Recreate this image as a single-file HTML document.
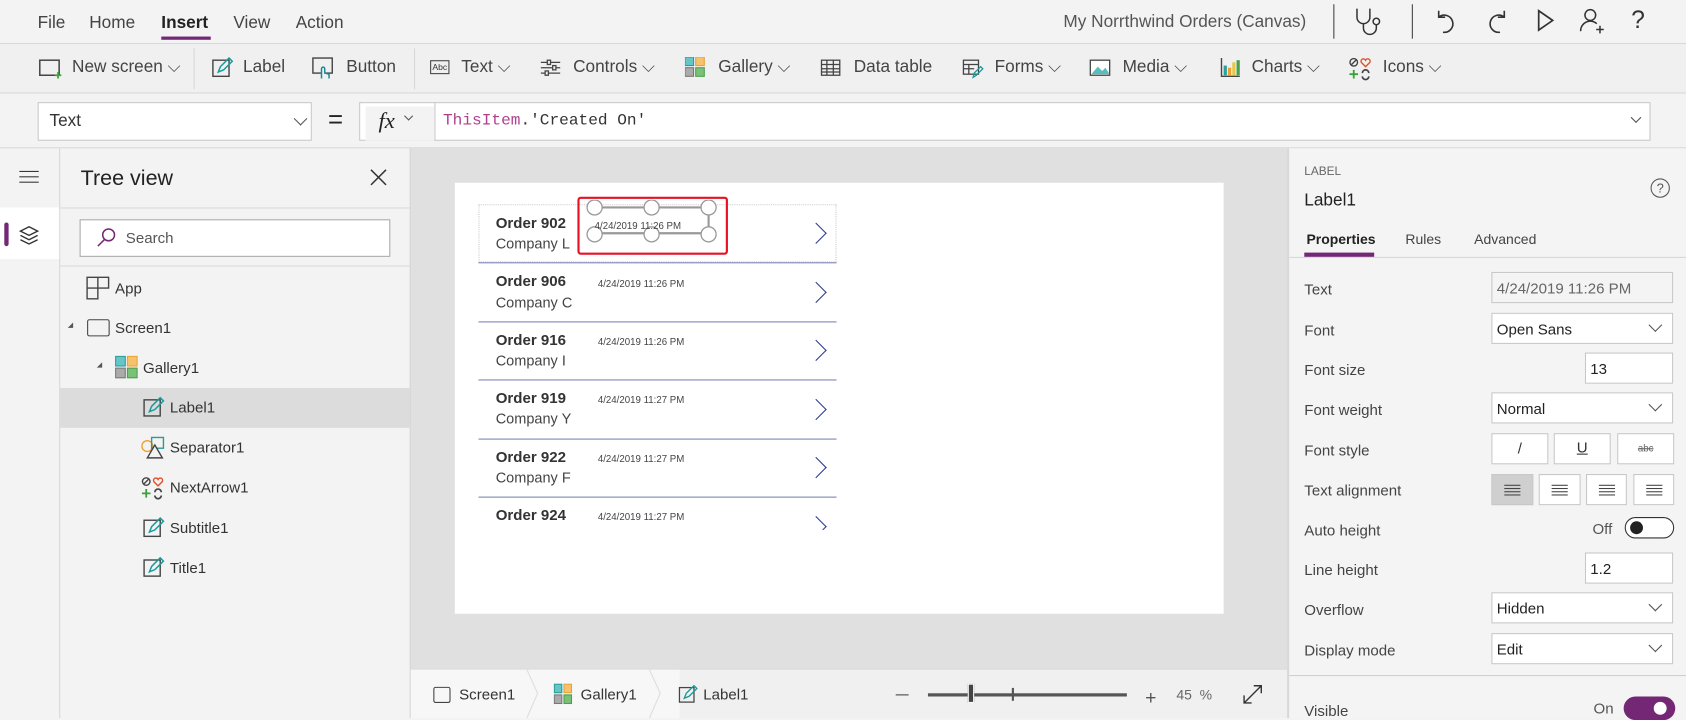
<!DOCTYPE html>
<html><head><meta charset="utf-8"><style>
*{box-sizing:border-box;margin:0;padding:0}
html,body{width:1686px;height:718px;overflow:hidden;background:#f3f3f3}
#r{position:absolute;left:0;top:0;width:1568px;height:668px;transform:scale(1.07526,1.07485);transform-origin:0 0;font-family:"Liberation Sans",sans-serif;color:#333;background:#f3f3f3}
.a{position:absolute;white-space:nowrap}
.t{font-size:16px;color:#444}
.box{position:absolute;background:#fff;border:1px solid #c8c8c8}
.chev{position:absolute;width:9px;height:9px;border-right:1.3px solid #555;border-bottom:1.3px solid #555;transform:rotate(45deg)}
.lbl{position:absolute;left:1213px;font-size:14px;color:#444}
.dd{position:absolute;left:1387px;width:169px;height:29px;background:#fff;border:1px solid #c8c8c8;font-size:14px;padding:6px 0 0 4px;color:#222}
.row{position:absolute;left:445px;width:333px;border-bottom:1px solid #7d83b5}
.ti{font-size:14px;font-weight:bold;color:#333;position:absolute;left:16px}
.su{font-size:13.5px;color:#444;position:absolute;left:16px}
.dt{font-size:9px;color:#444;position:absolute;left:111px}
.arr{position:absolute;left:307px;width:14px;height:14px;border-right:1.6px solid #2f3a8f;border-top:1.6px solid #2f3a8f;transform:rotate(45deg)}
.tv{position:absolute;font-size:14px;color:#333}
.ab{position:absolute;top:441px;width:54px;height:29px;background:#fff;border:1px solid #c8c8c8}
.ab i{position:absolute;height:1px;background:#444}
</style></head><body><div id="r">
<div class="a t" style="left:35px;top:13px">File</div>
<div class="a t" style="left:83px;top:13px">Home</div>
<div class="a t" style="left:150px;top:13px;font-weight:bold;color:#222">Insert</div>
<div class="a" style="left:150px;top:34px;width:46px;height:3px;background:#742774"></div>
<div class="a t" style="left:217px;top:13px">View</div>
<div class="a t" style="left:275px;top:13px">Action</div>
<div class="a t" style="left:989px;top:12px;color:#555">My Norrthwind Orders (Canvas)</div>
<div class="a" style="left:1240px;top:4px;width:1px;height:32px;background:#444"></div>
<div class="a" style="left:1313px;top:4px;width:1px;height:32px;background:#444"></div>
<svg class="a" style="left:1258px;top:6px" width="32" height="28" viewBox="0 0 32 28" fill="none" stroke="#333" stroke-width="1.4"><path d="M4 2v8a6 6 0 0 0 12 0V2M10 16v4a6 6 0 0 0 12 0v-3"/><circle cx="22" cy="14" r="3"/></svg>
<svg class="a" style="left:1333px;top:6px" width="24" height="26" viewBox="0 0 24 26" fill="none" stroke="#333" stroke-width="1.5"><path d="M5 4v6h6M5 10a8 8 0 1 1 4 14"/></svg>
<svg class="a" style="left:1380px;top:6px" width="24" height="26" viewBox="0 0 24 26" fill="none" stroke="#333" stroke-width="1.5"><path d="M19 4v6h-6M19 10a8 8 0 1 0-4 14"/></svg>
<svg class="a" style="left:1428px;top:8px" width="20" height="22" viewBox="0 0 20 22" fill="none" stroke="#333" stroke-width="1.6"><path d="M3 2l13 9-13 9z"/></svg>
<svg class="a" style="left:1468px;top:6px" width="26" height="26" viewBox="0 0 26 26" fill="none" stroke="#333" stroke-width="1.4"><circle cx="11" cy="8" r="5"/><path d="M2 23a9 9 0 0 1 15-7M20 18v7M16.5 21.5h7"/></svg>
<div class="a" style="left:1517px;top:5px;font-size:23px;color:#333">?</div>
<div class="a" style="left:0;top:40px;width:1568px;height:1px;background:#d8d8d8"></div>
<div class="a" style="left:0;top:41px;width:1568px;height:45px;background:#f0f0f0"></div>
<div class="a" style="left:0;top:86px;width:1568px;height:1px;background:#d8d8d8"></div>
<div class="a" style="left:180px;top:45px;width:1px;height:38px;background:#d8d8d8"></div>
<div class="a" style="left:385px;top:45px;width:1px;height:38px;background:#d8d8d8"></div>
<svg class="a" style="left:36px;top:55px" width="22" height="18" viewBox="0 0 22 18" fill="none"><rect x="1" y="1" width="18" height="14" stroke="#444" stroke-width="1.4"/><path d="M18 12v6M15 15h6" stroke="#3aa13a" stroke-width="1.6"/></svg>
<div class="a t" style="left:67px;top:54px">New screen ⌵</div>
<svg class="a" style="left:197px;top:53px" width="20" height="20" viewBox="0 0 20 20" fill="none"><rect x="1" y="3" width="15" height="15" stroke="#444" stroke-width="1.3"/><path d="M6 14l2-5 8-8 3 3-8 8z" stroke="#1a9a9a" stroke-width="1.4"/></svg>
<div class="a t" style="left:226px;top:54px">Label</div>
<svg class="a" style="left:290px;top:53px" width="22" height="22" viewBox="0 0 22 22" fill="none"><rect x="1" y="1" width="18" height="14" stroke="#444" stroke-width="1.3"/><path d="M9 20v-9a1.5 1.5 0 0 1 3 0v4l4 1v4" stroke="#1a8a9a" stroke-width="1.4" fill="#f0f0f0"/></svg>
<div class="a t" style="left:322px;top:54px">Button</div>
<div class="a" style="left:400px;top:56px;width:18px;height:13px;border:1px solid #444;font-size:8px;line-height:11px;text-align:center">Abc</div>
<div class="a t" style="left:429px;top:54px">Text ⌵</div>
<svg class="a" style="left:502px;top:55px" width="20" height="16" viewBox="0 0 20 16" fill="none" stroke="#444" stroke-width="1.2"><path d="M1 3h18M1 8h18M1 13h18"/><rect x="7" y="1" width="3" height="4" fill="#f0f0f0"/><rect x="12" y="6" width="3" height="4" fill="#f0f0f0"/><rect x="5" y="11" width="3" height="4" fill="#f0f0f0"/></svg>
<div class="a t" style="left:533px;top:54px">Controls ⌵</div>
<svg class="a" style="left:637px;top:53px" width="19" height="19"><rect x="0" y="0" width="8" height="8" fill="#66c6c6" stroke="#2a9a9a"/><rect x="10" y="0" width="8" height="8" fill="#f6c26b" stroke="#e8a23a"/><rect x="0" y="10" width="8" height="8" fill="#aaa" stroke="#777"/><rect x="10" y="10" width="8" height="8" fill="#79c179" stroke="#4aa04a"/></svg>
<div class="a t" style="left:668px;top:54px">Gallery ⌵</div>
<svg class="a" style="left:763px;top:55px" width="19" height="16" viewBox="0 0 19 16" fill="none" stroke="#444" stroke-width="1.2"><rect x="1" y="1" width="17" height="14"/><path d="M1 5h17M1 9h17M1 12h17M6 1v14M12 1v14"/></svg>
<div class="a t" style="left:794px;top:54px">Data table</div>
<svg class="a" style="left:895px;top:55px" width="20" height="18" viewBox="0 0 20 18" fill="none" stroke="#444" stroke-width="1.2"><rect x="1" y="1" width="14" height="13"/><path d="M1 5h14M1 9h10M6 5v9"/><path d="M10 17l1-4 6-6 2 2-6 6z" stroke="#1a9a9a"/></svg>
<div class="a t" style="left:925px;top:54px">Forms ⌵</div>
<svg class="a" style="left:1013px;top:55px" width="20" height="16" viewBox="0 0 20 16"><rect x="1" y="1" width="18" height="14" fill="#fff" stroke="#444" stroke-width="1.2"/><path d="M2 14l6-7 4 4 3-3 4 6z" fill="#55bfbf"/></svg>
<div class="a t" style="left:1044px;top:54px">Media ⌵</div>
<svg class="a" style="left:1135px;top:53px" width="19" height="19"><path d="M1 1v17h17" stroke="#444" fill="none" stroke-width="1.3"/><rect x="3" y="8" width="3" height="9" fill="#2aa0a0"/><rect x="7" y="10" width="3" height="7" fill="#f0a030"/><rect x="11" y="5" width="3" height="12" fill="#e8c84a"/><rect x="15" y="3" width="3" height="14" fill="#4aa04a"/></svg>
<div class="a t" style="left:1164px;top:54px">Charts ⌵</div>
<svg class="a" style="left:1254px;top:53px" width="22" height="22" viewBox="0 0 22 22" fill="none" stroke-width="1.3"><circle cx="5" cy="5" r="3.5" stroke="#444"/><path d="M2.5 7.5l5-5" stroke="#444"/><path d="M16 9l-4-4a2 2 0 0 1 4-2 2 2 0 0 1 4 2z" stroke="#e0502a"/><path d="M5 12v8M1 16h8" stroke="#3aa13a" stroke-width="1.7"/><path d="M13 15a3 3 0 0 1 6 0M19 18a3 3 0 0 1-6 0" stroke="#444" stroke-width="1.6"/></svg>
<div class="a t" style="left:1286px;top:54px">Icons ⌵</div>
<div class="box" style="left:35px;top:95px;width:255px;height:36px"></div>
<div class="a" style="left:46px;top:104px;font-size:16px;color:#333">Text</div>
<div class="chev" style="left:275px;top:106px"></div>
<div class="a" style="left:305px;top:98px;font-size:24px;color:#222">=</div>
<div class="box" style="left:334px;top:95px;width:1201px;height:36px"></div>
<div class="a" style="left:404px;top:95px;width:1px;height:36px;background:#c8c8c8"></div>
<div class="a" style="left:340px;top:99px;width:64px;height:32px;background:#f3f3f3"></div>
<div class="a" style="left:352px;top:100px;font-size:21px;font-style:italic;font-family:'Liberation Serif',serif;color:#222">fx</div>
<div class="chev" style="left:377px;top:105px;width:6px;height:6px;border-width:1px"></div>
<div class="a" style="left:412px;top:104px;font-family:'Liberation Mono',monospace;font-size:15px;color:#333"><span style="color:#b0408f">ThisItem</span>.'Created On'</div>
<div class="chev" style="left:1518px;top:106px;width:7px;height:7px;border-width:1px"></div>
<div class="a" style="left:0;top:137px;width:1568px;height:1px;background:#d8d8d8"></div>
<div class="a" style="left:55px;top:138px;width:1px;height:530px;background:#d8d8d8"></div>
<div class="a" style="left:18px;top:159px;width:18px;height:1.3px;background:#333;box-shadow:0 5px 0 #333,0 10px 0 #333"></div>
<div class="a" style="left:0;top:193px;width:55px;height:48px;background:#fff"></div>
<div class="a" style="left:4px;top:207px;width:4px;height:22px;background:#742774;border-radius:2px"></div>
<svg class="a" style="left:17px;top:210px" width="20" height="18" viewBox="0 0 20 18" fill="none" stroke="#333" stroke-width="1.3"><path d="M10 1l8 4-8 4-8-4z"/><path d="M2 9l8 4 8-4M2 13l8 4 8-4"/></svg>
<div class="a" style="left:75px;top:155px;font-size:20px;color:#222">Tree view</div>
<svg class="a" style="left:344px;top:157px" width="16" height="16" stroke="#333" stroke-width="1.4"><path d="M1 1l14 14M15 1L1 15"/></svg>
<div class="a" style="left:56px;top:193px;width:325px;height:1px;background:#dadada"></div>
<div class="box" style="left:74px;top:204px;width:289px;height:35px;border-color:#aaa"></div>
<svg class="a" style="left:89px;top:211px" width="20" height="20" fill="none" stroke="#742774" stroke-width="1.4"><circle cx="12" cy="7.5" r="5.5"/><path d="M8 12l-6 6"/></svg>
<div class="a" style="left:117px;top:213px;font-size:14px;color:#555">Search</div>
<div class="a" style="left:56px;top:247px;width:325px;height:1px;background:#dadada"></div>
<div class="a" style="left:381px;top:138px;width:1px;height:530px;background:#d0d0d0"></div>
<svg class="a" style="left:80px;top:257px" width="22" height="22" fill="none" stroke="#444" stroke-width="1.3"><path d="M1 1h20v10H11V21H1zM1 11h10M11 1v10"/></svg>
<div class="tv" style="left:107px;top:260px">App</div>
<div class="a" style="left:63px;top:300px;border-left:5px solid transparent;border-bottom:5px solid #555"></div>
<div class="a" style="left:81px;top:297px;width:21px;height:16px;border:1.3px solid #444;border-radius:2px"></div>
<div class="tv" style="left:107px;top:297px">Screen1</div>
<div class="a" style="left:90px;top:337px;border-left:5px solid transparent;border-bottom:5px solid #555"></div>
<svg class="a" style="left:107px;top:331px" width="22" height="22"><rect x="0.5" y="0.5" width="9" height="9" fill="#66c6c6" stroke="#2a9a9a"/><rect x="11.5" y="0.5" width="9" height="9" fill="#f6c26b" stroke="#e8a23a"/><rect x="0.5" y="11.5" width="9" height="9" fill="#aaa" stroke="#777"/><rect x="11.5" y="11.5" width="9" height="9" fill="#79c179" stroke="#4aa04a"/></svg>
<div class="tv" style="left:133px;top:334px">Gallery1</div>
<div class="a" style="left:56px;top:361px;width:325px;height:37px;background:#dcdcdc"></div>
<svg class="a" style="left:133px;top:369px" width="20" height="20" viewBox="0 0 20 20" fill="none"><rect x="1" y="3" width="15" height="15" stroke="#444" stroke-width="1.3"/><path d="M6 14l2-5 8-8 3 3-8 8z" stroke="#1a9a9a" stroke-width="1.4"/></svg>
<div class="tv" style="left:158px;top:371px">Label1</div>
<svg class="a" style="left:131px;top:406px" width="24" height="22" fill="none" stroke-width="1.3"><circle cx="6" cy="9" r="5" stroke="#f0a030"/><rect x="10" y="1" width="11" height="10" stroke="#2a9a9a"/><path d="M13 8l7 12H6z" stroke="#444" fill="#f3f3f3"/></svg>
<div class="tv" style="left:158px;top:408px">Separator1</div>
<svg class="a" style="left:131px;top:443px" width="22" height="22" viewBox="0 0 22 22" fill="none" stroke-width="1.3"><circle cx="5" cy="5" r="3.5" stroke="#444"/><path d="M2.5 7.5l5-5" stroke="#444"/><path d="M16 9l-4-4a2 2 0 0 1 4-2 2 2 0 0 1 4 2z" stroke="#e0502a"/><path d="M5 12v8M1 16h8" stroke="#3aa13a" stroke-width="1.7"/><path d="M13 15a3 3 0 0 1 6 0M19 18a3 3 0 0 1-6 0" stroke="#444" stroke-width="1.6"/></svg>
<div class="tv" style="left:158px;top:445px">NextArrow1</div>
<svg class="a" style="left:133px;top:481px" width="20" height="20" viewBox="0 0 20 20" fill="none"><rect x="1" y="3" width="15" height="15" stroke="#444" stroke-width="1.3"/><path d="M6 14l2-5 8-8 3 3-8 8z" stroke="#1a9a9a" stroke-width="1.4"/></svg>
<div class="tv" style="left:158px;top:483px">Subtitle1</div>
<svg class="a" style="left:133px;top:518px" width="20" height="20" viewBox="0 0 20 20" fill="none"><rect x="1" y="3" width="15" height="15" stroke="#444" stroke-width="1.3"/><path d="M6 14l2-5 8-8 3 3-8 8z" stroke="#1a9a9a" stroke-width="1.4"/></svg>
<div class="tv" style="left:158px;top:520px">Title1</div>
<div class="a" style="left:382px;top:138px;width:815px;height:484px;background:#e0e0e0"></div>
<div class="a" style="left:423px;top:170px;width:715px;height:401px;background:#fff"></div>
<div class="a" style="left:445px;top:190px;width:333px;height:54px;border:1px dotted #ccc"></div>
<div class="row" style="top:190px;height:55px"><div class="ti" style="top:9px">Order 902</div><div class="su" style="top:29px">Company L</div><div class="arr" style="top:20px"></div></div>
<div class="row" style="top:245px;height:55px"><div class="ti" style="top:8px">Order 906</div><div class="su" style="top:29px">Company C</div><div class="dt" style="top:14px">4/24/2019 11:26 PM</div><div class="arr" style="top:20px"></div></div>
<div class="row" style="top:300px;height:54px"><div class="ti" style="top:8px">Order 916</div><div class="su" style="top:28px">Company I</div><div class="dt" style="top:13px">4/24/2019 11:26 PM</div><div class="arr" style="top:19px"></div></div>
<div class="row" style="top:354px;height:55px"><div class="ti" style="top:8px">Order 919</div><div class="su" style="top:28px">Company Y</div><div class="dt" style="top:13px">4/24/2019 11:27 PM</div><div class="arr" style="top:20px"></div></div>
<div class="row" style="top:409px;height:54px"><div class="ti" style="top:8px">Order 922</div><div class="su" style="top:28px">Company F</div><div class="dt" style="top:13px">4/24/2019 11:27 PM</div><div class="arr" style="top:19px"></div></div>
<div class="row" style="top:463px;height:30px;border:none;overflow:hidden"><div class="ti" style="top:8px">Order 924</div><div class="dt" style="top:13px">4/24/2019 11:27 PM</div><div class="arr" style="top:20px"></div></div>
<div class="a" style="left:537px;top:183px;width:140px;height:54px;border:2px solid #e81123;border-radius:3px"></div>
<svg class="a" style="left:540px;top:186px" width="132" height="46" fill="#fff" stroke="#999" stroke-width="1.2"><path d="M13 7H59M73 7H119M13 31H59M73 31H119M119 13v12" fill="none" stroke-width="2"/><circle cx="13" cy="7" r="7"/><circle cx="66" cy="7" r="7"/><circle cx="119" cy="7" r="7"/><circle cx="13" cy="32" r="7"/><circle cx="66" cy="32" r="7"/><circle cx="119" cy="32" r="7"/></svg>
<div class="a" style="left:553px;top:205px;font-size:9px;color:#444">4/24/2019 11:26 PM</div>
<div class="a" style="left:382px;top:622px;width:815px;height:46px;background:#f0f0f0;border-top:1px solid #d8d8d8"></div>
<div class="a" style="left:382px;top:623px;width:250px;height:45px;background:#f7f7f7"></div>
<svg class="a" style="left:470px;top:623px" width="200" height="45" fill="none" stroke="#ddd"><path d="M20 0l10 22-10 23M134 0l10 22-10 23"/></svg>
<div class="a" style="left:403px;top:639px;width:16px;height:15px;border:1.3px solid #444;border-radius:2px"></div>
<div class="a" style="left:427px;top:638px;font-size:14px">Screen1</div>
<svg class="a" style="left:515px;top:636px" width="18" height="20"><rect x="0.5" y="0.5" width="7" height="8" fill="#66c6c6" stroke="#2a9a9a"/><rect x="9.5" y="0.5" width="7" height="8" fill="#f6c26b" stroke="#e8a23a"/><rect x="0.5" y="10.5" width="7" height="8" fill="#aaa" stroke="#777"/><rect x="9.5" y="10.5" width="7" height="8" fill="#79c179" stroke="#4aa04a"/></svg>
<div class="a" style="left:540px;top:638px;font-size:14px">Gallery1</div>
<svg class="a" style="left:631px;top:637px" width="18" height="18" viewBox="0 0 20 20" fill="none"><rect x="1" y="3" width="15" height="15" stroke="#444" stroke-width="1.3"/><path d="M6 14l2-5 8-8 3 3-8 8z" stroke="#1a9a9a" stroke-width="1.4"/></svg>
<div class="a" style="left:654px;top:638px;font-size:14px">Label1</div>
<div class="a" style="left:833px;top:646px;width:12px;height:1px;background:#444"></div>
<div class="a" style="left:863px;top:645px;width:185px;height:3px;background:#555"></div>
<div class="a" style="left:900px;top:636px;width:6px;height:18px;background:#444;border:1px solid #fff"></div>
<div class="a" style="left:941px;top:640px;width:2px;height:12px;background:#555"></div>
<div class="a" style="left:1065px;top:639px;font-size:18px;color:#555">+</div>
<div class="a" style="left:1094px;top:639px;font-size:13px;color:#666">45 &nbsp;%</div>
<svg class="a" style="left:1155px;top:636px" width="20" height="20" fill="none" stroke="#333" stroke-width="1.3"><path d="M2 18L18 2M11 2h7v7M2 11v7h7"/></svg>
<div class="a" style="left:1197px;top:138px;width:2px;height:530px;background:#d8d8d8"></div>
<div class="a" style="left:1199px;top:138px;width:369px;height:530px;background:#f4f4f4"></div>
<div class="a" style="left:1213px;top:154px;font-size:11px;color:#666">LABEL</div>
<div class="a" style="left:1213px;top:178px;font-size:16px;color:#222">Label1</div>
<div class="a" style="left:1535px;top:166px;width:18px;height:18px;border:1.3px solid #555;border-radius:50%;font-size:12px;text-align:center;line-height:16px;color:#555">?</div>
<div class="a" style="left:1215px;top:215px;font-size:13px;font-weight:bold;color:#222">Properties</div>
<div class="a" style="left:1213px;top:235px;width:65px;height:4px;background:#742774"></div>
<div class="a" style="left:1307px;top:215px;font-size:13px;color:#444">Rules</div>
<div class="a" style="left:1371px;top:215px;font-size:13px;color:#444">Advanced</div>
<div class="a" style="left:1199px;top:239px;width:369px;height:1px;background:#d8d8d8"></div>
<div class="lbl" style="top:261px">Text</div>
<div class="dd" style="top:253px;background:#f4f4f4;color:#666;font-size:14px">4/24/2019 11:26 PM</div>
<div class="lbl" style="top:299px">Font</div>
<div class="dd" style="top:291px">Open Sans</div><div class="chev" style="left:1535px;top:298px"></div>
<div class="lbl" style="top:336px">Font size</div>
<div class="dd" style="top:328px;left:1474px;width:82px">13</div>
<div class="lbl" style="top:373px">Font weight</div>
<div class="dd" style="top:365px">Normal</div><div class="chev" style="left:1535px;top:372px"></div>
<div class="lbl" style="top:411px">Font style</div>
<div class="ab" style="left:1387px;top:403px;width:53px;text-align:center;font-size:14px;padding-top:5px">/</div>
<div class="ab" style="left:1445px;top:403px;width:53px;text-align:center;font-size:14px;padding-top:4px;text-decoration:underline">U</div>
<div class="ab" style="left:1504px;top:403px;width:53px;text-align:center;font-size:9px;padding-top:8px;text-decoration:line-through;color:#666">abc</div>
<div class="lbl" style="top:448px">Text alignment</div>
<div class="ab" style="left:1387px;background:#cfcfcf;width:39px"><i style="left:11px;top:9px;width:15px;box-shadow:0 3px 0 #444,0 6px 0 #444,0 9px 0 #444"></i></div>
<div class="ab" style="left:1431px;width:39px"><i style="left:11px;top:9px;width:15px;box-shadow:0 3px 0 #444,0 6px 0 #444,0 9px 0 #444"></i></div>
<div class="ab" style="left:1475px;width:38px"><i style="left:11px;top:9px;width:15px;box-shadow:0 3px 0 #444,0 6px 0 #444,0 9px 0 #444"></i></div>
<div class="ab" style="left:1519px;width:38px"><i style="left:11px;top:9px;width:15px;box-shadow:0 3px 0 #444,0 6px 0 #444,0 9px 0 #444"></i></div>
<div class="lbl" style="top:485px">Auto height</div>
<div class="a" style="left:1481px;top:484px;font-size:14px;color:#555">Off</div>
<div class="a" style="left:1511px;top:481px;width:46px;height:20px;border:1.3px solid #333;border-radius:10px;background:#fff"></div>
<div class="a" style="left:1516px;top:485px;width:12px;height:12px;border-radius:50%;background:#222"></div>
<div class="lbl" style="top:522px">Line height</div>
<div class="dd" style="top:514px;left:1474px;width:82px">1.2</div>
<div class="lbl" style="top:559px">Overflow</div>
<div class="dd" style="top:551px">Hidden</div><div class="chev" style="left:1535px;top:558px"></div>
<div class="lbl" style="top:597px">Display mode</div>
<div class="dd" style="top:589px">Edit</div><div class="chev" style="left:1535px;top:596px"></div>
<div class="a" style="left:1199px;top:628px;width:369px;height:1px;background:#d0d0d0"></div>
<div class="lbl" style="top:653px">Visible</div>
<div class="a" style="left:1482px;top:651px;font-size:14px;color:#555">On</div>
<div class="a" style="left:1510px;top:648px;width:48px;height:22px;border-radius:11px;background:#742774"></div>
<div class="a" style="left:1538px;top:653px;width:12px;height:12px;border-radius:50%;background:#fff"></div>
</div></body></html>
